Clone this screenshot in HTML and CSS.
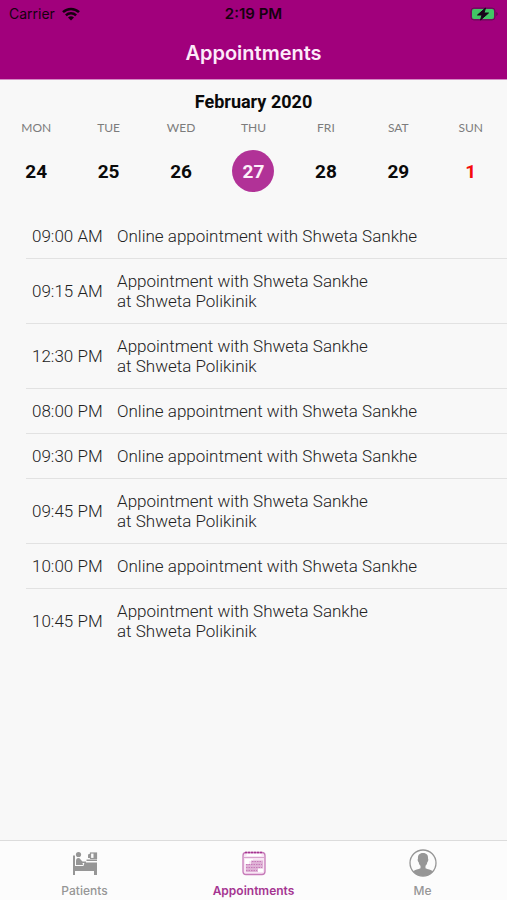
FILE: index.html
```html
<!DOCTYPE html>
<html lang="en">
<head>
<meta charset="utf-8">
<meta name="viewport" content="width=device-width, initial-scale=1">
<title>Appointments</title>
<link rel="stylesheet" href="styles.css">
</head>
<body>
<header class="header">
  <div class="status">
    <div class="carrier">
      <span>Carrier</span>
      <svg class="wifi" viewBox="0 0 18 14" aria-hidden="true">
        <path d="M1 5.200a11.500 11.500 0 0 1 16 0" />
        <path d="M3.900 8.400a7.300 7.300 0 0 1 10.200 0" />
        <path class="wifi-dot" d="M9 13.600 6 10.600a4.300 4.300 0 0 1 6 0z" />
      </svg>
    </div>
    <time class="clock">2:19 PM</time>
    <svg class="battery" viewBox="0 0 28 14" aria-hidden="true">
      <rect x="1" y="1" width="24" height="12" rx="3" fill="#7d1168" stroke="#6d0a58" />
      <rect x="2" y="2" width="22" height="10" rx="2" fill="#42c765" />
      <path d="M26 5v4q2-.6 2-2t-2-2z" fill="#6d0a58" />
      <path d="M15.500 1 7.500 8H12l-1.500 5 8-7H14z" fill="#18051a" stroke="#18051a" />
    </svg>
  </div>
  <h1 class="title">Appointments</h1>
</header>
<main class="content">
  <section class="calendar">
    <h2 class="month">February 2020</h2>
    <div class="week">
      <div class="day"><span class="weekday">MON</span><button class="date">24</button></div>
      <div class="day"><span class="weekday">TUE</span><button class="date">25</button></div>
      <div class="day"><span class="weekday">WED</span><button class="date">26</button></div>
      <div class="day"><span class="weekday">THU</span><button class="date selected" aria-pressed="true">27</button></div>
      <div class="day"><span class="weekday">FRI</span><button class="date">28</button></div>
      <div class="day"><span class="weekday">SAT</span><button class="date">29</button></div>
      <div class="day"><span class="weekday">SUN</span><button class="date holiday">1</button></div>
    </div>
  </section>
  <ul class="list">
    <li class="row"><time class="time">09:00 AM</time><p class="text">Online appointment with Shweta Sankhe</p></li>
    <li class="row"><time class="time">09:15 AM</time><p class="text">Appointment with Shweta Sankhe<br>at Shweta Polikinik</p></li>
    <li class="row"><time class="time">12:30 PM</time><p class="text">Appointment with Shweta Sankhe<br>at Shweta Polikinik</p></li>
    <li class="row"><time class="time">08:00 PM</time><p class="text">Online appointment with Shweta Sankhe</p></li>
    <li class="row"><time class="time">09:30 PM</time><p class="text">Online appointment with Shweta Sankhe</p></li>
    <li class="row"><time class="time">09:45 PM</time><p class="text">Appointment with Shweta Sankhe<br>at Shweta Polikinik</p></li>
    <li class="row"><time class="time">10:00 PM</time><p class="text">Online appointment with Shweta Sankhe</p></li>
    <li class="row"><time class="time">10:45 PM</time><p class="text">Appointment with Shweta Sankhe<br>at Shweta Polikinik</p></li>
  </ul>
</main>
<nav class="tabs">
  <a class="tab" href="#patients">
    <svg class="icon" viewBox="0 0 28 28" aria-hidden="true">
      <g fill="currentColor">
        <path d="M2 6.500h2V17h22v9h-3v-4H4v4H2z" />
        <circle cx="7.500" cy="5.500" r="2.600" />
        <path d="M5 16v-4q0-3 2.500-3 1.500 0 2.500 2l1.500 1.500H15V14h-3.500l.5 2z" />
        <path d="M13.500 13.500H26v5H12z" />
        <path d="M15.500 10.500H26V12H15.500zM17 5.500l2.500-1V9H17z" />
      </g>
      <rect x="19.500" y="4" width="6" height="5.500" fill="none" stroke="currentColor" stroke-width="1.200" />
      <path d="M22.500 4h3v5.500h-3z" fill="currentColor" />
    </svg>
    <span>Patients</span>
  </a>
  <a class="tab active" href="#appointments" aria-current="page">
    <svg class="icon" viewBox="0 0 28 28" aria-hidden="true">
      <rect x="3" y="3.500" width="22" height="22" rx="3" fill="#f8e6f4" stroke="#c67ab8" stroke-width="1.300" />
      <path d="M5 3.500h18" stroke="#a53591" stroke-width="1.400" stroke-dasharray="2 1" />
      <path d="M6.500 6h15" stroke="#fff" stroke-width="2" />
      <path d="M4 8.500h20" stroke="#d7a4cd" />
      <path d="M5 10h8v2H9v3H5zM18 19h5v4h-5z" fill="#fff" />
      <path d="M11 11.500h12v8h-5v3.500H6v-8h5z" fill="#dfb2d6" />
      <path d="M12 12.500h10M6 15.500h16M6 18.500h16M6 21.500h11" stroke="#c67ab8" stroke-width="1" stroke-dasharray="1.500 1" />
    </svg>
    <span>Appointments</span>
  </a>
  <a class="tab" href="#me">
    <svg class="icon" viewBox="0 0 28 28" aria-hidden="true">
      <circle cx="14" cy="14" r="13" fill="none" stroke="currentColor" stroke-width="1.300" />
      <path d="M14 4c-3.700 0-5.300 2.300-5 5.500-.7.500-.2 3.300.7 3.700.3 1.800 1 2.800 1.800 3.500v2.600c-2 1.200-5.500 1.200-7.500 3.200A13 13 0 0 0 14 27a13 13 0 0 0 10-4.500c-2-2-5.500-2-7.500-3.200v-2.600c.8-.7 1.500-1.700 1.800-3.500.9-.4 1.400-3.200.7-3.700C19.300 6.300 17.700 4 14 4z" fill="currentColor" />
    </svg>
    <span>Me</span>
  </a>
</nav>
</body>
</html>
```
FILE: styles.css
```css
* {
  box-sizing: border-box;
}

body {
  margin: 0;
  min-height: 100vh;
  display: flex;
  flex-direction: column;
  background: #f8f8f8;
  color: #222;
  font-family: Roboto, "Liberation Sans", sans-serif;
}

.header {
  background: #a1007c;
  border-bottom: 1px solid #d48bc4;
}

.status {
  display: grid;
  grid-template-columns: 1fr auto 1fr;
  align-items: center;
  height: 27px;
  padding: 0 9px;
  color: #16000f;
  font-family: Inter, sans-serif;
  font-size: 14px;
}

.carrier {
  display: flex;
  align-items: center;
  gap: 7px;
}

.wifi {
  width: 18px;
  height: 14px;
  fill: none;
  stroke: currentColor;
  stroke-width: 2.5;
}

.wifi-dot {
  fill: currentColor;
  stroke: none;
}

.clock {
  font-size: 15px;
  font-weight: 600;
}

.battery {
  width: 28px;
  height: 14px;
  justify-self: end;
}

.title {
  margin: 0;
  height: 52px;
  color: #fdeafa;
  font-family: Inter, sans-serif;
  font-size: 20px;
  font-weight: 600;
  line-height: 52px;
  text-align: center;
}

.content {
  flex: 1;
}

.calendar {
  padding: 10px 0 22px;
}

.month {
  margin: 0;
  color: #0a0a0a;
  font-size: 18px;
  font-weight: 700;
  line-height: 24px;
  text-align: center;
}

.week {
  display: grid;
  grid-template-columns: repeat(7, 1fr);
}

.day {
  display: flex;
  flex-direction: column;
  align-items: center;
  gap: 8px;
}

.weekday {
  color: #7c7c7c;
  font-family: Lato, sans-serif;
  font-size: 12px;
  line-height: 28px;
}

.date {
  width: 42px;
  height: 42px;
  padding: 0;
  border: 0;
  border-radius: 50%;
  background: none;
  color: #0a0a0a;
  font-family: inherit;
  font-size: 19px;
  font-weight: 700;
}

.selected {
  background: #b13297;
  color: #fdf0fa;
}

.holiday {
  color: #f50c0c;
}

.list {
  margin: 0;
  padding: 0 0 0 26px;
  list-style: none;
}

.row {
  display: flex;
  align-items: center;
  gap: 14px;
  padding: 12px 6px;
  border-bottom: 1px solid #e2e2e2;
  font-size: 17px;
  font-weight: 300;
  line-height: 20px;
}

.row:last-child {
  border-bottom: 0;
}

.time {
  flex: none;
  width: 71px;
}

.text {
  margin: 0;
}

.tabs {
  display: grid;
  grid-template-columns: repeat(3, 1fr);
  height: 60px;
  border-top: 1px solid #dcdcdc;
  background: #fcfcfc;
}

.tab {
  display: flex;
  flex-direction: column;
  align-items: center;
  gap: 6px;
  padding-top: 8px;
  color: #969696;
  font-family: Inter, sans-serif;
  font-size: 12px;
  font-weight: 500;
  line-height: 16px;
  text-decoration: none;
}

.active {
  color: #a53591;
  font-weight: 600;
}

.icon {
  width: 28px;
  height: 28px;
}
```
